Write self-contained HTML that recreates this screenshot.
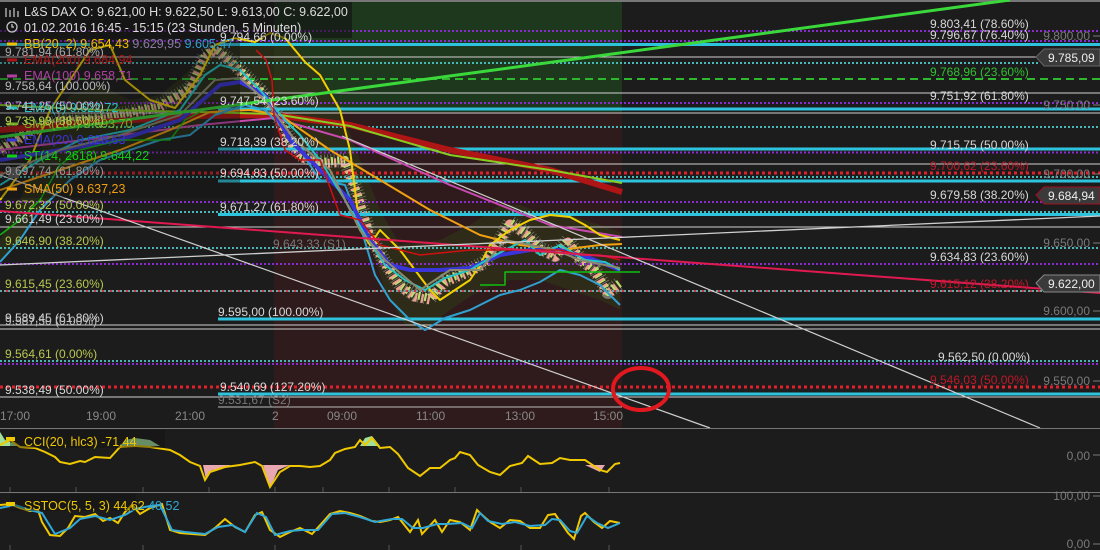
<!DOCTYPE html>
<html><head><meta charset="utf-8"><style>
html,body{margin:0;padding:0;background:#1c1c1c;width:1100px;height:550px;overflow:hidden}
svg{display:block;font-family:"Liberation Sans",sans-serif}
</style></head><body>
<svg width="1100" height="550" viewBox="0 0 1100 550" xmlns="http://www.w3.org/2000/svg">
<rect width="1100" height="550" fill="#1c1c1c"/>
<rect x="274" y="0" width="348" height="112" fill="#1e381e"/>
<rect x="274" y="112" width="348" height="316" fill="#2f1b1b"/>
<rect x="0" y="0" width="1100" height="2" fill="#777"/>
<!-- BB fill -->
<polygon points="0,240 20,200 40,150 70,95 100,85 130,100 160,95 190,70 215,45 250,40 290,42 320,70 345,120 360,160 380,210 400,245 440,240 470,225 500,205 520,205 545,215 570,215 600,225 620,232 620,310 600,300 570,290 540,280 510,280 480,290 450,310 425,330 405,325 385,290 365,230 345,185 320,180 300,140 275,115 245,105 215,115 190,135 160,140 130,150 100,160 70,180 40,210 20,240 0,262" fill="#2f3218" opacity="0.7"/>
<!-- candles approximation -->
<g fill="none" stroke-linejoin="round">
<polyline stroke="#8a8a80" stroke-width="14" stroke-dasharray="0.8 2.4" opacity="0.8" points="0,150 30,130 60,120 100,118 130,112 160,105 190,88 205,55 215,48 230,60 245,75 260,90 275,110 290,140 300,155 320,162 345,160 358,195 370,235 385,262 400,285 415,295 430,298 445,280 465,272 485,262 500,240 510,222 525,232 540,248 555,255 568,240 580,258 595,270 608,292 620,283"/>
<polyline stroke="#b8e070" stroke-width="8" stroke-dasharray="2.2 4.2" points="0,150 30,130 60,120 100,118 130,112 160,105 190,88 205,55 215,48 230,60 245,75 260,90 275,110 290,140 300,155 320,162 345,160 358,195 370,235 385,262 400,285 415,295 430,298 445,280 465,272 485,262 500,240 510,222 525,232 540,248 555,255 568,240 580,258 595,270 608,292 620,283"/>
<polyline stroke="#f0a090" stroke-width="9" stroke-dasharray="2.2 4.2" stroke-dashoffset="3.2" points="0,152 30,132 60,122 100,120 130,114 160,107 190,90 205,57 215,50 230,62 245,77 260,92 275,112 290,142 300,157 320,164 345,162 358,197 370,237 385,264 400,287 415,297 430,300 445,282 465,274 485,264 500,242 510,224 525,234 540,250 555,257 568,242 580,260 595,272 608,294 620,285"/>
</g>
<!-- horizontal levels -->
<g stroke-width="2">
<line x1="0" y1="31" x2="1100" y2="31" stroke="#8a2bd0" stroke-dasharray="2 2"/>
<line x1="0" y1="41" x2="1100" y2="41" stroke="#8a2bd0" stroke-dasharray="2 2"/>
<line x1="218" y1="44.5" x2="1100" y2="44.5" stroke="#2ec3dc" stroke-width="3"/>
<line x1="0" y1="44.5" x2="90" y2="44.5" stroke="#2ec3dc" stroke-width="3"/>
<line x1="0" y1="57" x2="1040" y2="57" stroke="#d0d0d0" stroke-width="1"/>
<line x1="0" y1="63" x2="1040" y2="63" stroke="#48b8b8" stroke-dasharray="2 2"/>
<line x1="0" y1="79" x2="1100" y2="79" stroke="#2fb82f" stroke-dasharray="8 5"/>
<line x1="0" y1="93" x2="1100" y2="93" stroke="#d0d0d0" stroke-width="1"/>
<line x1="0" y1="103" x2="1100" y2="103" stroke="#8a2bd0" stroke-dasharray="2 2"/>
<line x1="218" y1="109" x2="1100" y2="109" stroke="#2ec3dc" stroke-width="3"/>
<line x1="0" y1="113" x2="1100" y2="113" stroke="#d0d0d0" stroke-width="1"/>
<line x1="0" y1="127" x2="1100" y2="127" stroke="#48b8b8" stroke-dasharray="2 2"/>
<line x1="218" y1="149" x2="1100" y2="149" stroke="#2ec3dc" stroke-width="3"/>
<line x1="0" y1="152.5" x2="1100" y2="152.5" stroke="#8a2bd0" stroke-dasharray="2 2"/>
<line x1="0" y1="164" x2="1100" y2="164" stroke="#d0d0d0" stroke-width="1"/>
<line x1="0" y1="173" x2="1100" y2="173" stroke="#e0202a" stroke-width="3" stroke-dasharray="3 3"/>
<line x1="0" y1="177" x2="1100" y2="177" stroke="#48b8b8" stroke-dasharray="2 2"/>
<line x1="218" y1="181" x2="1100" y2="181" stroke="#2ec3dc" stroke-width="3"/>
<line x1="0" y1="202" x2="1100" y2="202" stroke="#8a2bd0" stroke-dasharray="2 2"/>
<line x1="0" y1="212" x2="1100" y2="212" stroke="#48b8b8" stroke-dasharray="2 2"/>
<line x1="218" y1="214.5" x2="1100" y2="214.5" stroke="#2ec3dc" stroke-width="3"/>
<line x1="0" y1="227" x2="1100" y2="227" stroke="#d0d0d0" stroke-width="1"/>
<line x1="0" y1="248" x2="1100" y2="248" stroke="#48b8b8" stroke-dasharray="2 2"/>
<line x1="0" y1="264" x2="1100" y2="264" stroke="#8a2bd0" stroke-dasharray="2 2"/>
<line x1="0" y1="291" x2="1100" y2="291" stroke="#6aa8a8" stroke-dasharray="2 2"/>
<line x1="0" y1="291" x2="1100" y2="291" stroke="#d03040" stroke-dasharray="2 6" stroke-dashoffset="2"/>
<line x1="218" y1="319" x2="1100" y2="319" stroke="#2ec3dc" stroke-width="3"/>
<line x1="0" y1="325" x2="1100" y2="325" stroke="#d0d0d0" stroke-width="1"/>
<line x1="0" y1="329" x2="1100" y2="329" stroke="#d0d0d0" stroke-width="1"/>
<line x1="0" y1="361" x2="1100" y2="361" stroke="#48b8b8" stroke-dasharray="2 2"/>
<line x1="0" y1="364" x2="1100" y2="364" stroke="#8a2bd0" stroke-dasharray="2 2"/>
<line x1="0" y1="387" x2="1100" y2="387" stroke="#e0202a" stroke-width="3" stroke-dasharray="3 3"/>
<line x1="218" y1="394" x2="1100" y2="394" stroke="#2ec3dc" stroke-width="3"/>
<line x1="0" y1="397" x2="1100" y2="397" stroke="#d0d0d0" stroke-width="1"/>
<line x1="218" y1="407" x2="622" y2="407" stroke="#bbb" stroke-width="1"/>
</g>
<!-- indicator curves -->
<g fill="none" stroke-linejoin="round">
<polyline stroke="#b01515" stroke-width="6" points="0,130 100,122 200,116 274,115 350,125 450,150 550,170 622,192"/>
<polyline stroke="#c84ab0" stroke-width="2" points="0,150 100,138 200,125 274,118 350,140 450,185 550,225 622,237"/>
<polyline stroke="#88cc22" stroke-width="2" points="0,105 100,110 200,112 274,114 350,126 450,155 550,170 622,183"/>
<polyline stroke="#f0a010" stroke-width="2" points="0,190 60,170 120,150 170,130 210,112 250,110 280,115 330,150 380,180 430,210 480,235 520,245 560,250 600,245 622,244"/>
<polyline stroke="#f0d000" stroke-width="2" points="0,200 30,160 50,110 70,80 90,50 110,45 125,80 150,100 175,108 200,75 215,45 235,38 255,42 270,33 285,38 295,50 305,62 320,75 340,110 350,150 360,230 370,245 380,230 400,250 415,270 430,290 440,300 455,290 470,280 480,265 490,245 510,230 530,220 550,215 570,217 585,225 600,235 620,240"/>
<polyline stroke="#30a0d0" stroke-width="2" points="0,262 20,240 40,210 70,180 100,160 130,150 160,140 190,135 215,115 245,105 265,110 280,125 300,150 320,180 345,185 360,225 375,275 390,300 410,320 425,330 445,318 470,310 500,295 520,290 540,282 560,270 580,275 600,285 620,305"/>
<polyline stroke="#3a35d8" stroke-width="4" points="0,160 60,150 120,140 180,120 220,85 240,82 265,95 290,140 320,170 350,200 370,240 390,265 410,270 440,270 470,268 500,255 530,250 560,250 590,258 620,270"/>
<polyline stroke="#24c4c4" stroke-width="2" points="0,185 40,160 80,140 130,130 180,110 205,75 220,65 240,70 260,90 285,120 300,135 320,160 345,200 365,235 385,265 405,280 425,290 445,278 470,270 490,258 505,250 525,240 540,255 560,245 585,260 605,262 620,270"/>
<polyline stroke="#8a8a70" stroke-width="2" points="0,175 60,150 120,135 180,115 215,80 240,78 265,100 295,140 330,170 360,230 385,260 420,290 450,270 480,270 505,240 530,245 555,250 580,260 605,265 620,268"/>
<polyline stroke="#d01010" stroke-width="1.5" points="256,50 266,60 272,80 274,115 285,150 300,160 320,160 340,215 360,220 380,245 400,250 420,255 470,250 560,250 580,255 600,255 620,260"/>
<polyline stroke="#10c010" stroke-width="1.5" points="0,235 20,220 40,200 60,165 80,150 100,145 120,140 170,140 185,120 200,112" opacity="0.9"/>
<polyline stroke="#10c010" stroke-width="1.5" points="480,285 505,285 505,272 560,272 640,272"/>
<line x1="0" y1="137" x2="1010" y2="0" stroke="#3ad83a" stroke-width="3"/>
<line x1="0" y1="211" x2="1100" y2="293" stroke="#e01a50" stroke-width="2"/>
<line x1="0" y1="265" x2="1100" y2="216" stroke="#cfcfcf" stroke-width="1.3"/>
<line x1="0" y1="175" x2="710" y2="428" stroke="#cfcfcf" stroke-width="1.2"/>
<line x1="342" y1="136" x2="1040" y2="428" stroke="#cfcfcf" stroke-width="1.2"/>
</g>
<ellipse cx="641" cy="389" rx="28" ry="21" fill="none" stroke="#e0181f" stroke-width="4"/>
<!-- legend boxes -->
<rect x="0" y="2" width="352" height="36" fill="#111" opacity="0.6"/>
<rect x="0" y="38" width="240" height="160" fill="#111" opacity="0.35"/>
<g font-size="12.5">
<text x="24" y="16" fill="#ddd">L&amp;S DAX  O: 9.621,00  H: 9.622,50  L: 9.613,00  C: 9.622,00</text>
<text x="24" y="32" fill="#ddd">01.02.2016 16:45 - 15:15 (23 Stunden, 5 Minuten)</text>
<text x="24" y="48" fill="#f0c000">BB(20, 2)  9.654,43 <tspan fill="#8a7aa0">9.629,95</tspan> <tspan fill="#30a0d0">9.605,47</tspan></text>
<text x="24" y="64" fill="#b01515">EMA(200)  9.684,94</text>
<text x="24" y="80" fill="#b040a0">EMA(100)  9.658,71</text>
<text x="24" y="112" fill="#24c4c4">EMA(9)  9.622,72</text>
<text x="24" y="128" fill="#70b020">SMA(200)  9.693,70</text>
<text x="24" y="144" fill="#3a35d8">EMA(20)  9.628,63</text>
<text x="24" y="160" fill="#10d010">ST(14, 2618)  9.644,22</text>
<text x="24" y="193" fill="#f0a010">SMA(50)  9.637,23</text>
</g>
<g fill="none" stroke-width="3">
<line x1="7" y1="44" x2="17" y2="44" stroke="#f0c000"/><line x1="7" y1="60" x2="17" y2="60" stroke="#b01515"/>
<line x1="7" y1="76" x2="17" y2="76" stroke="#b040a0"/><line x1="7" y1="108" x2="17" y2="108" stroke="#24c4c4"/>
<line x1="7" y1="124" x2="17" y2="124" stroke="#70b020"/><line x1="7" y1="140" x2="17" y2="140" stroke="#3a35d8"/>
<line x1="7" y1="156" x2="17" y2="156" stroke="#10d010"/><line x1="7" y1="189" x2="17" y2="189" stroke="#f0a010"/>
</g>
<rect x="8" y="167" width="11" height="11" fill="#444"/>
<g stroke="#ccc" stroke-width="1.2" fill="none"><circle cx="12" cy="27" r="5"/><path d="M12 24v3h2"/><path d="M6 8v9M10 10v7M14 8v9M18 11v6"/></g>
<!-- fib labels -->
<g font-size="12" fill="#d8d8d8">
<text x="930" y="28">9.803,41 (78.60%)</text>
<text x="930" y="39">9.796,67 (76.40%)</text>
<text x="930" y="76" fill="#30c030">9.768,96 (23.60%)</text>
<text x="930" y="100">9.751,92 (61.80%)</text>
<text x="930" y="149">9.715,75 (50.00%)</text>
<text x="930" y="170" fill="#c01828">9.700,62 (23.60%)</text>
<text x="930" y="199">9.679,58 (38.20%)</text>
<text x="930" y="261">9.634,83 (23.60%)</text>
<text x="930" y="288" fill="#c01828">9.615,12 (38.20%)</text>
<text x="938" y="361">9.562,50 (0.00%)</text>
<text x="930" y="384" fill="#c01828">9.546,03 (50.00%)</text>
<text x="220" y="41">9.794,66 (0.00%)</text>
<text x="220" y="105">9.747,54 (23.60%)</text>
<text x="220" y="146">9.718,39 (38.20%)</text>
<text x="220" y="177">9.694,83 (50.00%)</text>
<text x="220" y="211">9.671,27 (61.80%)</text>
<text x="218" y="316">9.595,00 (100.00%)</text>
<text x="220" y="391">9.540,69 (127.20%)</text>
<text x="218" y="404" fill="#777">9.531,67 (S2)</text>
<text x="273" y="248" fill="#777">9.643,33 (S1)</text>
<text x="5" y="56" fill="#aaa">9.781,94 (61.80%)</text>
<text x="5" y="90" fill="#bbb">9.758,64 (100.00%)</text>
<text x="5" y="110" fill="#bbb">9.741,25 (50.00%)</text>
<text x="5" y="125" fill="#b8c850">9.733,93 (38.60%)</text>
<text x="5" y="175" fill="#999">9.697,74 (61.80%)</text>
<text x="5" y="209" fill="#b8c850">9.672,32 (50.00%)</text>
<text x="5" y="223">9.661,49 (23.60%)</text>
<text x="5" y="245" fill="#b8c850">9.646,90 (38.20%)</text>
<text x="5" y="288" fill="#b8c850">9.615,45 (23.60%)</text>
<text x="5" y="322">9.589,45 (61.80%)</text>
<text x="5" y="325" fill="#bbb">9.587,50 (0.00%)</text>
<text x="5" y="358" fill="#b8c850">9.564,61 (0.00%)</text>
<text x="5" y="394">9.538,49 (50.00%)</text>
</g>
<!-- right axis -->
<g font-size="12" fill="#7a7a7a" text-anchor="end">
<text x="1090" y="40">9.800,00</text><text x="1090" y="109">9.750,00</text><text x="1090" y="178">9.700,00</text>
<text x="1090" y="247">9.650,00</text><text x="1090" y="315">9.600,00</text><text x="1090" y="385">9.550,00</text>
<text x="1090" y="460">0,00</text><text x="1090" y="500">100,00</text><text x="1090" y="548">0,00</text>
</g>
<g stroke="#7a7a7a"><line x1="1093" y1="36" x2="1100" y2="36"/><line x1="1093" y1="105" x2="1100" y2="105"/><line x1="1093" y1="174" x2="1100" y2="174"/><line x1="1093" y1="243" x2="1100" y2="243"/><line x1="1093" y1="311" x2="1100" y2="311"/><line x1="1093" y1="381" x2="1100" y2="381"/><line x1="1093" y1="455" x2="1100" y2="455"/><line x1="1093" y1="496" x2="1100" y2="496"/><line x1="1093" y1="544" x2="1100" y2="544"/></g>
<g font-size="12">
<path d="M1036 57 L1044 49 H1100 V66 H1044 Z" fill="#3a3a3a" stroke="#666"/><text x="1048" y="62" fill="#eee">9.785,09</text>
<path d="M1036 195 L1044 187 H1100 V204 H1044 Z" fill="#3a3a3a" stroke="#a01020"/><text x="1048" y="200" fill="#eee">9.684,94</text>
<path d="M1036 283 L1044 275 H1100 V292 H1044 Z" fill="#3a3a3a" stroke="#888"/><text x="1048" y="288" fill="#eee">9.622,00</text>
</g>
<!-- time axis -->
<g font-size="12" fill="#888">
<text x="0" y="420">17:00</text><text x="86" y="420">19:00</text><text x="175" y="420">21:00</text><text x="272" y="420">2</text>
<text x="327" y="420">09:00</text><text x="416" y="420">11:00</text><text x="505" y="420">13:00</text><text x="593" y="420">15:00</text>
</g>
<line x1="0" y1="428.5" x2="1100" y2="428.5" stroke="#777"/>
<line x1="0" y1="492.5" x2="1100" y2="492.5" stroke="#777"/>
<g stroke="#555"><line x1="10" y1="487" x2="10" y2="492"/><line x1="76" y1="487" x2="76" y2="492"/><line x1="143" y1="487" x2="143" y2="492"/><line x1="209" y1="487" x2="209" y2="492"/><line x1="275" y1="487" x2="275" y2="492"/><line x1="323" y1="487" x2="323" y2="492"/><line x1="389" y1="487" x2="389" y2="492"/><line x1="455" y1="487" x2="455" y2="492"/><line x1="521" y1="487" x2="521" y2="492"/><line x1="609" y1="487" x2="609" y2="492"/>
<line x1="10" y1="545" x2="10" y2="550"/><line x1="143" y1="545" x2="143" y2="550"/><line x1="275" y1="545" x2="275" y2="550"/><line x1="389" y1="545" x2="389" y2="550"/><line x1="521" y1="545" x2="521" y2="550"/><line x1="609" y1="545" x2="609" y2="550"/></g>
<!-- CCI -->
<polygon points="0,446 0,432 5,440 20,446" fill="#9fe09a"/>
<polygon points="120,446 125,440 135,438 150,440 160,446" fill="#9fe09a"/>
<polygon points="360,446 365,438 372,436 380,446" fill="#9fe09a"/>
<polygon points="203,465 206,480 212,470 230,467 230,465" fill="#e8a8b0"/>
<polygon points="263,465 270,488 278,470 290,465" fill="#e8a8b0"/>
<polygon points="585,465 600,472 605,465" fill="#e8a8b0"/>
<polyline fill="none" stroke="#f0c800" stroke-width="2" points="0,445 10,440 20,447 35,448 45,452 55,457 60,462 70,464 80,461 85,462 95,457 110,458 120,447 135,446 150,447 170,450 180,455 190,462 200,466 205,480 210,472 225,467 240,465 255,462 262,466 270,487 280,472 290,466 300,466 310,467 320,466 330,460 335,453 345,449 355,447 360,440 365,445 372,438 380,448 390,447 398,454 408,468 420,476 430,468 440,468 450,460 455,458 460,452 470,455 478,465 490,472 500,475 510,466 522,463 528,456 540,464 552,463 560,458 570,460 585,460 600,470 607,472 615,464 620,463"/>
<rect x="10" y="430" width="155" height="18" fill="#111" opacity="0.4"/>
<rect x="6" y="437" width="9" height="4" fill="#f0c800"/>
<text x="24" y="446" font-size="12.5" fill="#f0c800">CCI(20, hlc3)  -71,44</text>
<!-- SSTOC -->
<polyline fill="none" stroke="#f0c800" stroke-width="2" points="0,505 10,504 20,508 30,511 38,510 42,522 50,535 60,536 68,528 75,516 85,517 95,514 103,521 110,518 118,523 125,512 132,505 140,514 150,508 162,504 170,530 180,533 192,534 205,535 215,528 225,519 235,527 245,532 255,515 262,512 270,530 280,537 290,532 300,528 312,534 322,523 330,514 340,511 350,513 360,516 372,521 380,522 390,520 398,517 410,532 418,520 422,534 435,520 442,532 450,520 460,522 470,530 477,510 480,513 490,522 500,528 510,520 520,521 530,528 540,528 548,515 555,514 568,533 574,539 581,516 585,513 594,522 602,528 610,521 620,523"/>
<polyline fill="none" stroke="#30a8d8" stroke-width="2" points="0,508 15,505 30,510 42,513 55,534 70,528 80,519 95,516 110,520 125,515 135,509 150,506 160,505 172,530 185,532 205,534 218,527 232,525 245,532 257,513 266,517 275,535 290,531 302,530 318,530 332,514 345,513 360,517 375,522 392,519 402,519 413,528 423,528 437,524 447,524 462,523 472,528 480,513 488,521 502,524 515,522 530,526 545,525 552,519 560,520 570,531 577,533 587,516 597,523 608,528 620,523"/>
<rect x="10" y="494" width="126" height="17" fill="#111" opacity="0.4"/>
<rect x="6" y="502" width="9" height="4" fill="#f0c800"/>
<text x="24" y="510" font-size="12.5" fill="#f0c800">SSTOC(5, 5, 3)  44,62  <tspan fill="#30a8d8">40,52</tspan></text>
</svg>
</body></html>
